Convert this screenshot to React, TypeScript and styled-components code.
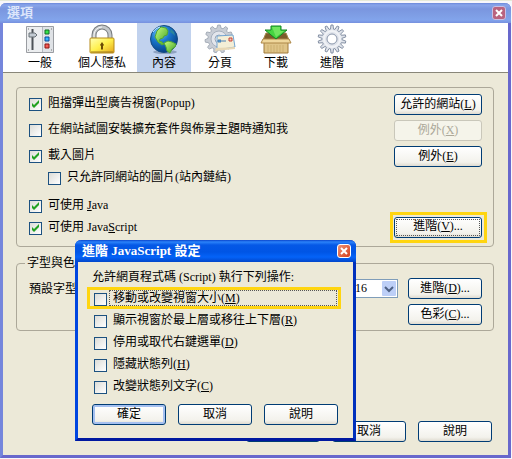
import React from "react";
import styled, { createGlobalStyle, css } from "styled-components";

const GlobalStyle = createGlobalStyle`
  *, *::before, *::after { box-sizing: border-box; }
  body {
    margin: 0;
    background: #f7f7fb;
    color: #000;
    font: 12px/16px "Liberation Serif", "Noto Sans CJK TC", serif;
  }
  button, input, select { font: inherit; color: inherit; margin: 0; }
`;

const Page = styled.main`
  position: relative;
  min-height: 100vh;
  display: flex;
  padding: 2px 1px 1px 0;
  border-top: 1px solid #e6ead8;
`;

const Window = styled.section`
  flex: 1;
  display: flex;
  flex-direction: column;
  background: #ece9d8;
  border: 3px solid #7586dc;
  border-top: 0;
  border-right-color: #6868cc;
  border-bottom-color: #6868cc;
  border-radius: 6px 6px 0 0;
`;

const TitleBar = styled.header<{ $active?: boolean }>`
  display: flex;
  align-items: center;
  justify-content: space-between;
  margin: 0 -3px;
  height: ${(p) => (p.$active ? 22 : 20)}px;
  padding: 0 5px 0 7px;
  border-radius: 6px 6px 0 0;
  color: ${(p) => (p.$active ? "#fff" : "#dce6fb")};
  background: ${(p) =>
    p.$active
      ? "linear-gradient(#0a45cc 0, #2b83fa 2px, #0558e6 5px, #0055e5 12px, #0463f8 17px, #0246ca 22px)"
      : "linear-gradient(#6b88da 0, #88a5ea 2px, #7a96df 6px, #7f9fe6 13px, #82a4ec 17px, #7690de 20px)"};
`;

const Title = styled.h1`
  margin: 0;
  font-size: 13px;
  line-height: 18px;
  font-weight: 700;
`;

const CloseButton = styled.button<{ $active?: boolean }>`
  width: 14px;
  height: 14px;
  padding: 0;
  display: flex;
  align-items: center;
  justify-content: center;
  border: 1px solid ${(p) => (p.$active ? "#fff" : "#c9bfe4")};
  border-radius: 3px;
  background: ${(p) => (p.$active ? "linear-gradient(135deg, #ef9275, #d6401c)" : "#b9637f")};
`;

const Toolbar = styled.nav`
  display: flex;
  gap: 2px;
  padding-left: 10px;
  height: 50px;
  background: #fff;
  border-bottom: 1px solid #898779;
`;

const Tab = styled.button<{ $selected?: boolean }>`
  display: flex;
  flex-direction: column;
  align-items: center;
  min-width: 54px;
  padding: 1px 9px 0;
  border: 0;
  background: ${(p) => (p.$selected ? "#c1d2ee" : "transparent")};
  svg { flex: none; }
`;

const Content = styled.div`
  padding: 14px 14px 0 13px;
`;

const Group = styled.fieldset`
  margin: 0;
  min-width: 0;
  border: 1px solid #aca899;
  border-radius: 4px;
`;

const ContentGroup = styled(Group)`
  padding: 2px 6px 8px 12px;
`;

const FontGroup = styled(Group)`
  margin-top: 6px;
  padding: 5px 11px 5px 12px;
`;

const Legend = styled.legend`
  margin-left: -4px;
  padding: 0 2px;
  line-height: 20px;
`;

const Row = styled.div<{ $height: number; $indent?: boolean; $spaced?: boolean }>`
  display: flex;
  align-items: center;
  justify-content: space-between;
  height: ${(p) => p.$height}px;
  margin-top: ${(p) => (p.$spaced ? 8 : 0)}px;
  padding-left: ${(p) => (p.$indent ? 19 : 0)}px;
`;

const CheckLabel = styled.label`
  display: flex;
  align-items: center;
  gap: 6px;
  white-space: nowrap;
`;

const CheckBox = styled.input`
  && { margin-top: 2px; }
  appearance: none;
  flex: none;
  width: 13px;
  height: 13px;
  border: 1px solid #1c5180;
  background: linear-gradient(135deg, #dcdcd7, #fff);
  &:checked {
    background:
      url("data:image/svg+xml,%3Csvg xmlns='http://www.w3.org/2000/svg' viewBox='0 0 11 11'%3E%3Cpath d='M2 4v3l2 2 5-5V1L4 6z' fill='%2321a121'/%3E%3C/svg%3E"),
      linear-gradient(135deg, #dcdcd7, #fff);
  }
`;

const CheckText = styled.span<{ $focused?: boolean }>`
  line-height: 16px;
  ${(p) => p.$focused && css`
    flex: 1;
    margin-left: -4px;
    padding-left: 3px;
    line-height: 14px;
    border: 1px dotted #555;
  `}
`;

const Button = styled.button<{ $wide?: boolean; $default?: boolean }>`
  width: ${(p) => (p.$wide ? 88 : 74)}px;
  height: 21px;
  padding: 0 0 2px;
  line-height: 16px;
  white-space: nowrap;
  border: 1px solid #003c74;
  border-radius: 3px;
  background: linear-gradient(#fff, #f3f2ec 80%, #dfdbd0);
  ${(p) => p.$default && css`box-shadow: inset 0 0 0 2px #a5c0f0;`}
  &:disabled {
    color: #aca899;
    border-color: #c9c7ba;
    background: #f5f4ea;
  }
`;

const ButtonInset = styled.div`
  display: flex;
  padding: 3px 5px 0 0;
`;

const Highlight = styled.div`
  display: flex;
  padding: 2px 2px 2px 1px;
  border: 3px solid #ffd510;
`;

const FocusButton = styled(Button)`
  outline: 1px dotted #555;
  outline-offset: -3px;
`;

const FontFields = styled.div`
  display: grid;
  grid-template-columns: 1fr auto auto;
  column-gap: 10px;
  row-gap: 5px;
  align-items: center;
`;

const SizeBox = styled.div`
  position: relative;
  display: flex;
  svg {
    position: absolute;
    right: 2px;
    top: 2px;
    pointer-events: none;
  }
`;

const SizeSelect = styled.select`
  appearance: none;
  width: 48px;
  height: 19px;
  padding: 0 0 2px 4px;
  border: 1px solid #7f9db9;
  border-radius: 0;
  background: #fff;
`;

const Stack = styled.div`
  grid-column: 3;
`;

const Footer = styled.footer`
  display: flex;
  justify-content: flex-end;
  gap: 12px;
  margin-top: auto;
  padding: 0 16px 13px;
`;

const Dialog = styled.section`
  position: absolute;
  left: 75px;
  top: 239px;
  width: 281px;
  background: #ece9d8;
  border: 3px solid #0046e0;
  border-top: 0;
  border-right-color: #0030bd;
  border-bottom-color: #0018a0;
  border-radius: 6px 6px 0 0;
`;

const DialogBody = styled.div`
  padding: 5px 12px 13px 9px;
`;

const Intro = styled.p`
  margin: 0 0 0 5px;
  line-height: 20px;
`;

const Option = styled.div<{ $marked?: boolean }>`
  height: 22px;
  display: flex;
  padding: 0 1px 0 4px;
  border: 3px solid ${(p) => (p.$marked ? "#ffd510" : "transparent")};
  label { flex: 1; }
`;

const DialogButtons = styled.div`
  display: flex;
  gap: 12px;
  margin: 7px 0 0 5px;
`;

const Close = () => (
  <svg width="8" height="8" viewBox="0 0 8 8" aria-hidden="true">
    <path d="M1 1l6 6M7 1L1 7" stroke="#fff" strokeWidth="2" />
  </svg>
);

const gear = (cx: number, cy: number, outer: number, inner: number, teeth: number) => {
  const points: string[] = [];
  for (let i = 0; i < teeth; i++) {
    [[-0.34, inner], [-0.16, outer], [0.16, outer], [0.34, inner]].forEach(([offset, radius]) => {
      const angle = ((i + offset) / teeth) * Math.PI * 2;
      points.push(`${(cx + Math.sin(angle) * radius).toFixed(1)} ${(cy - Math.cos(angle) * radius).toFixed(1)}`);
    });
  }
  return `M${points.join("L")}Z`;
};

const Icon = ({ children }: { children: React.ReactNode }) => (
  <svg width="32" height="31" viewBox="0 0 32 31" aria-hidden="true">{children}</svg>
);

const GeneralIcon = () => (
  <Icon>
    <path d="M2.500 2.500h27v26h-27z" fill="#dfe2e6" stroke="#9a9da2" />
    <path d="M3 3h15v25H3z" fill="#eceef0" />
    <path d="M18.500 3v25" stroke="#b4b8be" />
    <path d="M8.500 5v21" stroke="#4d5258" strokeWidth="2" />
    <path d="M5 9h6l2 2-2 2H5z" fill="#c2cad2" stroke="#6b7278" />
    <path d="M21 6h4v4h-4z" fill="#35e44a" stroke="#126c27" />
    <path d="M21 13h4v4h-4z" fill="#36b5ff" stroke="#0b4a9b" />
    <path d="M21 20h4v4h-4z" fill="#f45b55" stroke="#8e1612" />
    <path d="M4 5h1M4 26h1M27 5h1M27 26h1" stroke="#777" />
  </Icon>
);

const LockIcon = () => (
  <Icon>
    <defs>
      <linearGradient id="lock" x2="1" y2="1">
        <stop stopColor="#ffffb5" /><stop offset=".5" stopColor="#fff04b" /><stop offset="1" stopColor="#e5a51b" />
      </linearGradient>
    </defs>
    <path d="M8 15v-4a8 8 0 0 1 16 0v4" fill="none" stroke="#777b7e" strokeWidth="5" />
    <path d="M8 15v-4a8 8 0 0 1 16 0v4" fill="none" stroke="#c4c8ca" strokeWidth="3" />
    <path d="M8 13v-2a8 8 0 0 1 8-8" fill="none" stroke="#f6f6f6" />
    <rect x="4" y="14" width="24" height="15" rx="1" fill="url(#lock)" stroke="#b78b18" />
    <path d="M5 28h22" stroke="#9d7920" />
    <path d="M16 18l2 3-1 1v3l-1 1-1-1v-3l-1-1z" fill="#6b4b05" />
  </Icon>
);

const GlobeIcon = () => (
  <Icon>
    <defs>
      <radialGradient id="sea" cx=".35" cy=".25" r=".8">
        <stop stopColor="#78c9fa" /><stop offset=".45" stopColor="#1976cc" /><stop offset="1" stopColor="#063b7e" />
      </radialGradient>
      <linearGradient id="land" x2="1" y2="1"><stop stopColor="#c8ff80" /><stop offset="1" stopColor="#3b9d22" /></linearGradient>
    </defs>
    <ellipse cx="17" cy="28" rx="12" ry="2" fill="#8fa2c0" />
    <circle cx="16" cy="15" r="13.500" fill="url(#sea)" stroke="#154b82" />
    <path d="M9 7l4-4 5 1 2 3-1 4-3 1-1 2-3 1-1 2 3 1 2 2-2 1-4-3-3-5z" fill="url(#land)" stroke="#52a634" />
    <path d="M16 19l4-2 4 1 4 2-1 3-3 2-2 4-3-2-1-4z" fill="url(#land)" stroke="#52a634" />
    <path d="M23 5l3 3 1 4-2-2-3-2z" fill="#2b8599" />
    <path d="M5 8c2-3 4-4 7-5" fill="none" stroke="#c4eaff" />
  </Icon>
);

const PagesIcon = () => (
  <Icon>
    <path d={gear(15, 15, 14, 11, 11)} fill="#c8cdd5" stroke="#a5adb8" />
    <circle cx="15" cy="15" r="8" fill="#e3e6ec" stroke="#a7b0bd" />
    <circle cx="15" cy="15" r="4" fill="#fff" stroke="#9ba6b5" />
    <path d="M13 12l16-1 2 12-18 3z" fill="#f4eed6" stroke="#72a5d3" />
    <path d="M12 24l19-1v2l-20 2z" fill="#e8d8b6" />
    <path d="M14 16h3v2h-3zM18 17h4" fill="#55aee3" stroke="#4b7fb4" />
    <path d="M25 14h3v3h-3z" fill="#f7c4b5" stroke="#c64438" />
  </Icon>
);

const DownloadIcon = () => (
  <Icon>
    <path d="M6 9h20l3 7H3z" fill="#7c5c2b" stroke="#a6874c" />
    <path d="M4 18h24v11H4z" fill="#dfc488" stroke="#a07a3a" />
    <path d="M8 21v7M11 21v7M14 21v7M17 21v7M20 21v7M23 21v7" stroke="#cdb071" />
    <path d="M3 15h26l2 4H1z" fill="#efd79c" stroke="#ad8749" />
    <path d="M11 2h10v4h6L16 15 5 6h6z" fill="#45d541" stroke="#138526" />
    <path d="M12 3h8v4h4l-8 6z" fill="#70e55f" />
  </Icon>
);

const AdvancedIcon = () => (
  <Icon>
    <path d={gear(16, 15, 14, 10, 14)} fill="#dfe3ea" stroke="#8490a4" />
    <circle cx="16" cy="15" r="8" fill="none" stroke="#f0f2f6" strokeWidth="2" />
    <circle cx="16" cy="15" r="5" fill="#fff" stroke="#8995aa" />
  </Icon>
);

const tabs = [
  { name: "一般", Art: GeneralIcon },
  { name: "個人隱私", Art: LockIcon },
  { name: "內容", Art: GlobeIcon },
  { name: "分頁", Art: PagesIcon },
  { name: "下載", Art: DownloadIcon },
  { name: "進階", Art: AdvancedIcon },
];

const Check = ({ children, checked, focused }: { children: React.ReactNode; checked?: boolean; focused?: boolean }) => (
  <CheckLabel>
    <CheckBox type="checkbox" defaultChecked={checked} />
    <CheckText $focused={focused}>{children}</CheckText>
  </CheckLabel>
);

const options = [
  ["移動或改變視窗大小", "M"],
  ["顯示視窗於最上層或移往上下層", "R"],
  ["停用或取代右鍵選單", "D"],
  ["隱藏狀態列", "H"],
  ["改變狀態列文字", "C"],
];

export default function App() {
  return (
    <>
      <GlobalStyle />
      <Page>
        <Window aria-label="選項">
          <TitleBar>
            <Title>選項</Title>
            <CloseButton aria-label="關閉"><Close /></CloseButton>
          </TitleBar>
          <Toolbar>
            {tabs.map(({ name, Art }) => (
              <Tab key={name} $selected={name === "內容"}><Art />{name}</Tab>
            ))}
          </Toolbar>
          <Content>
            <ContentGroup>
              <Row $height={26}>
                <Check checked>阻擋彈出型廣告視窗(Popup)</Check>
                <ButtonInset><Button $wide>允許的網站(<u>L</u>)</Button></ButtonInset>
              </Row>
              <Row $height={26}>
                <Check>在網站試圖安裝擴充套件與佈景主題時通知我</Check>
                <ButtonInset><Button $wide disabled>例外(<u>X</u>)</Button></ButtonInset>
              </Row>
              <Row $height={26}>
                <Check checked>載入圖片</Check>
                <ButtonInset><Button $wide>例外(<u>E</u>)</Button></ButtonInset>
              </Row>
              <Row $height={18} $indent><Check>只允許同網站的圖片(站內鏈結)</Check></Row>
              <Row $height={22} $spaced><Check checked>可使用 <u>J</u>ava</Check></Row>
              <Row $height={22}>
                <Check checked>可使用 Java<u>S</u>cript</Check>
                <Highlight><FocusButton $wide>進階(<u>V</u>)...</FocusButton></Highlight>
              </Row>
            </ContentGroup>
            <FontGroup>
              <Legend>字型與色彩</Legend>
              <FontFields>
                <label htmlFor="font-size">預設字型</label>
                <SizeBox>
                  <SizeSelect id="font-size" defaultValue="16"><option>16</option></SizeSelect>
                  <svg width="14" height="15" viewBox="0 0 14 15" aria-hidden="true">
                    <rect width="14" height="15" rx="1" fill="#bdcff7" />
                    <path d="M3 6l4 4 4-4" fill="none" stroke="#4d6185" strokeWidth="2" />
                  </svg>
                </SizeBox>
                <Button>進階(<u>D</u>)...</Button>
                <Stack><Button>色彩(<u>C</u>)...</Button></Stack>
              </FontFields>
            </FontGroup>
          </Content>
          <Footer>
            <Button>確定</Button>
            <Button>取消</Button>
            <Button>說明</Button>
          </Footer>
        </Window>
        <Dialog role="dialog" aria-label="進階 JavaScript 設定">
          <TitleBar $active>
            <Title as="h2">進階 JavaScript 設定</Title>
            <CloseButton $active aria-label="關閉"><Close /></CloseButton>
          </TitleBar>
          <DialogBody>
            <Intro>允許網頁程式碼 (Script) 執行下列操作:</Intro>
            {options.map(([text, key], index) => (
              <Option key={key} $marked={index === 0}>
                <Check focused={index === 0}>{text}(<u>{key}</u>)</Check>
              </Option>
            ))}
            <DialogButtons>
              <Button $default>確定</Button>
              <Button>取消</Button>
              <Button>說明</Button>
            </DialogButtons>
          </DialogBody>
        </Dialog>
      </Page>
    </>
  );
}
